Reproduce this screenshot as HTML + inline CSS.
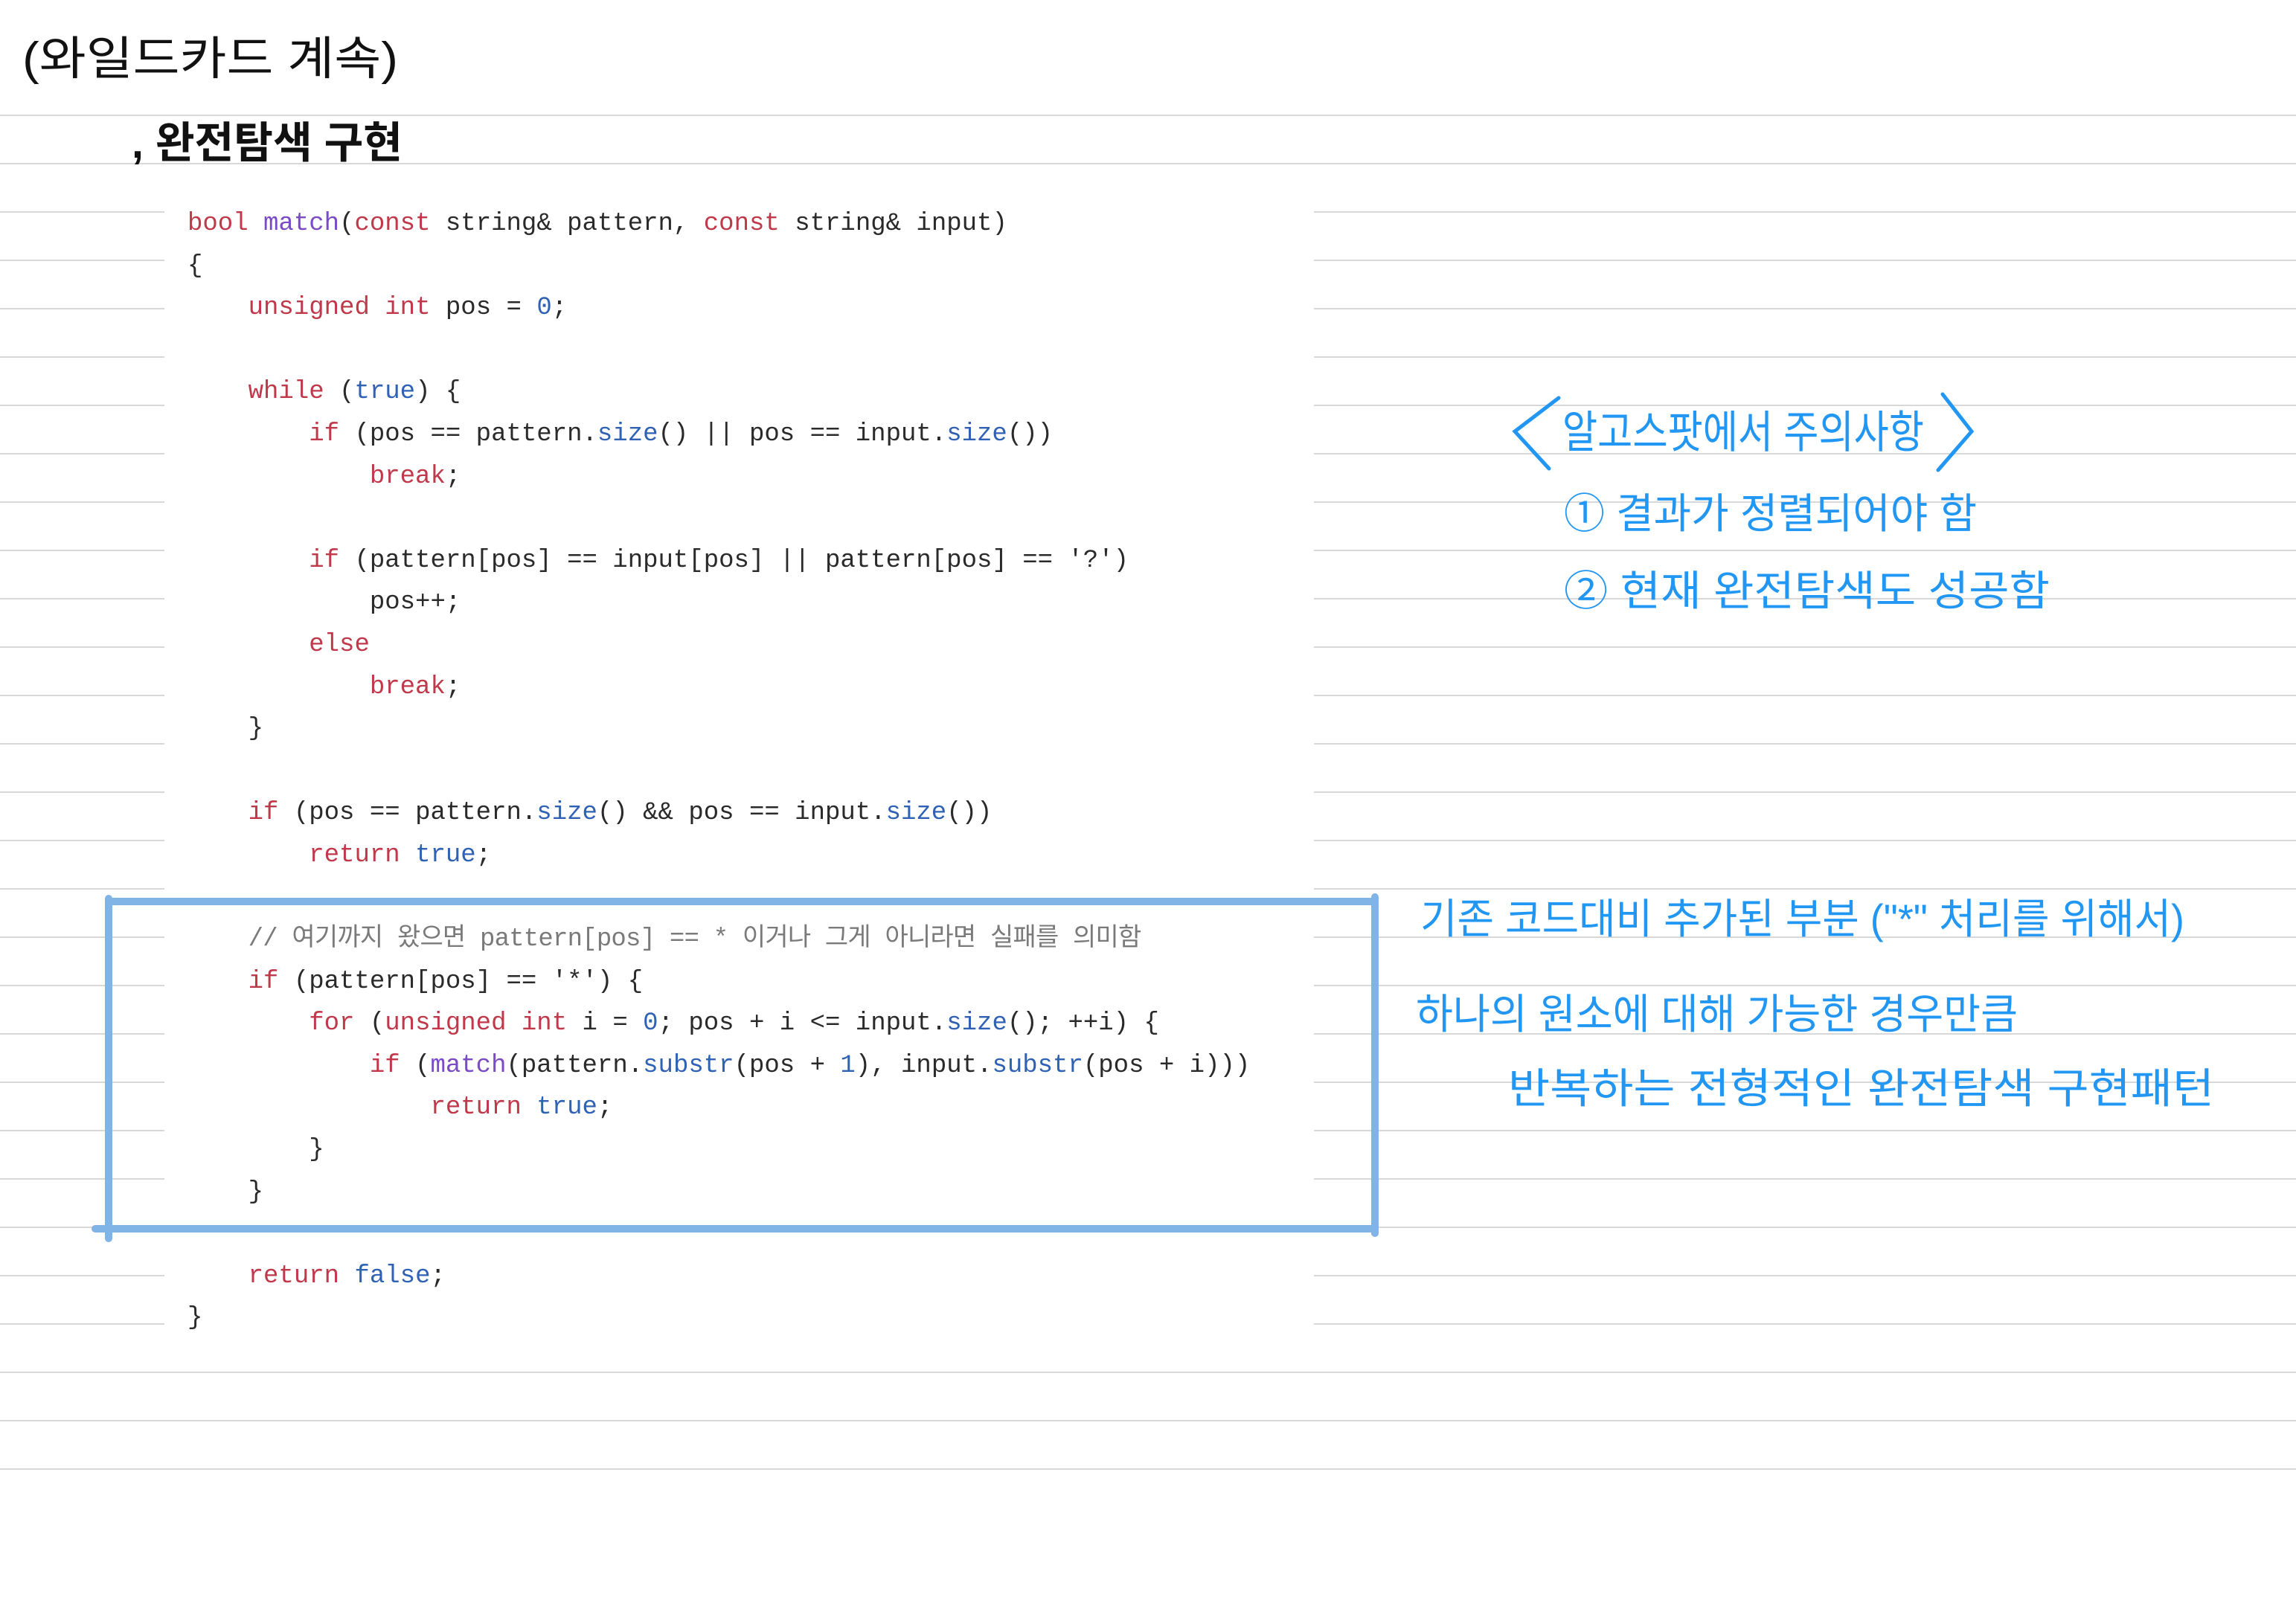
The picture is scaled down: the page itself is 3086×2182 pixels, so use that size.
<!DOCTYPE html>
<html><head><meta charset="utf-8">
<style>
html,body{margin:0;padding:0;background:#fff;}
body{width:3086px;height:2182px;position:relative;overflow:hidden;}
svg{position:absolute;left:0;top:0;}
.code{position:absolute;left:252px;top:273px;font-family:"Liberation Mono","Noto Sans CJK KR",monospace;font-size:34px;line-height:56.6px;color:#2a2a2a;white-space:pre;}
.k{color:#c0394b}.f{color:#7a4bc4}.b{color:#2f62b4}.c{color:#7a7a7a;letter-spacing:-0.8px}
</style></head><body>
<svg width="3086" height="2182" viewBox="0 0 3086 2182">
<g stroke="#d8d8d8" stroke-width="2">
<line x1="0" y1="155" x2="3086" y2="155"/><line x1="0" y1="220" x2="3086" y2="220"/>
<line x1="0" y1="285" x2="3086" y2="285"/><line x1="0" y1="350" x2="3086" y2="350"/>
<line x1="0" y1="415" x2="3086" y2="415"/><line x1="0" y1="480" x2="3086" y2="480"/>
<line x1="0" y1="545" x2="3086" y2="545"/><line x1="0" y1="610" x2="3086" y2="610"/>
<line x1="0" y1="675" x2="3086" y2="675"/><line x1="0" y1="740" x2="3086" y2="740"/>
<line x1="0" y1="805" x2="3086" y2="805"/><line x1="0" y1="870" x2="3086" y2="870"/>
<line x1="0" y1="935" x2="3086" y2="935"/><line x1="0" y1="1000" x2="3086" y2="1000"/>
<line x1="0" y1="1065" x2="3086" y2="1065"/><line x1="0" y1="1130" x2="3086" y2="1130"/>
<line x1="0" y1="1195" x2="3086" y2="1195"/><line x1="0" y1="1260" x2="3086" y2="1260"/>
<line x1="0" y1="1325" x2="3086" y2="1325"/><line x1="0" y1="1390" x2="3086" y2="1390"/>
<line x1="0" y1="1455" x2="3086" y2="1455"/><line x1="0" y1="1520" x2="3086" y2="1520"/>
<line x1="0" y1="1585" x2="3086" y2="1585"/><line x1="0" y1="1650" x2="3086" y2="1650"/>
<line x1="0" y1="1715" x2="3086" y2="1715"/><line x1="0" y1="1780" x2="3086" y2="1780"/>
<line x1="0" y1="1845" x2="3086" y2="1845"/><line x1="0" y1="1910" x2="3086" y2="1910"/>
<line x1="0" y1="1975" x2="3086" y2="1975"/>
</g>
<rect x="221" y="235" width="1545" height="1560" fill="#fff"/>
<g font-family="'Liberation Sans','Noto Sans CJK KR',sans-serif" fill="#111">
<text x="30" y="100" font-size="62" textLength="505" lengthAdjust="spacingAndGlyphs">(와일드카드 계속)</text>
<text x="177" y="212" font-size="58" font-weight="bold" textLength="364" lengthAdjust="spacingAndGlyphs">, 완전탐색 구현</text>
</g>
<g font-family="'Liberation Sans','Noto Sans CJK KR',sans-serif" fill="#2196f3">
<path d="M2095 535 L2036 580 L2082 630 M2611 530 L2650 580 L2605 632" stroke="#2196f3" stroke-width="5" fill="none" stroke-linecap="round"/>
<text x="2100" y="602" font-size="60" textLength="486" lengthAdjust="spacingAndGlyphs">알고스팟에서 주의사항</text>
<text x="2102" y="710" font-size="56" textLength="555" lengthAdjust="spacingAndGlyphs">① 결과가 정렬되어야 함</text>
<text x="2102" y="814" font-size="56" textLength="653" lengthAdjust="spacingAndGlyphs">② 현재 완전탐색도 성공함</text>
<text x="1909" y="1255" font-size="56" textLength="1027" lengthAdjust="spacingAndGlyphs">기존 코드대비 추가된 부분 ("*" 처리를 위해서)</text>
<text x="1903" y="1383" font-size="56" textLength="809" lengthAdjust="spacingAndGlyphs">하나의 원소에 대해 가능한 경우만큼</text>
<text x="2027" y="1483" font-size="56" textLength="949" lengthAdjust="spacingAndGlyphs">반복하는 전형적인 완전탐색 구현패턴</text>
</g>
<g stroke="#80b3e6" stroke-width="10" stroke-linecap="round" fill="none">
<line x1="146" y1="1208" x2="146" y2="1665"/>
<line x1="146" y1="1212" x2="1848" y2="1212"/>
<line x1="1848" y1="1206" x2="1848" y2="1658"/>
<line x1="128" y1="1652" x2="1848" y2="1652"/>
</g>
</svg>
<div class="code"><span class="k">bool</span> <span class="f">match</span>(<span class="k">const</span> string&amp; pattern, <span class="k">const</span> string&amp; input)
{
    <span class="k">unsigned</span> <span class="k">int</span> pos = <span class="b">0</span>;

    <span class="k">while</span> (<span class="b">true</span>) {
        <span class="k">if</span> (pos == pattern.<span class="b">size</span>() || pos == input.<span class="b">size</span>())
            <span class="k">break</span>;

        <span class="k">if</span> (pattern[pos] == input[pos] || pattern[pos] == '?')
            pos++;
        <span class="k">else</span>
            <span class="k">break</span>;
    }

    <span class="k">if</span> (pos == pattern.<span class="b">size</span>() &amp;&amp; pos == input.<span class="b">size</span>())
        <span class="k">return</span> <span class="b">true</span>;

    <span class="c">// 여기까지 왔으면 pattern[pos] == * 이거나 그게 아니라면 실패를 의미함</span>
    <span class="k">if</span> (pattern[pos] == '*') {
        <span class="k">for</span> (<span class="k">unsigned</span> <span class="k">int</span> i = <span class="b">0</span>; pos + i &lt;= input.<span class="b">size</span>(); ++i) {
            <span class="k">if</span> (<span class="f">match</span>(pattern.<span class="b">substr</span>(pos + <span class="b">1</span>), input.<span class="b">substr</span>(pos + i)))
                <span class="k">return</span> <span class="b">true</span>;
        }
    }

    <span class="k">return</span> <span class="b">false</span>;
}</div>
</body></html>
